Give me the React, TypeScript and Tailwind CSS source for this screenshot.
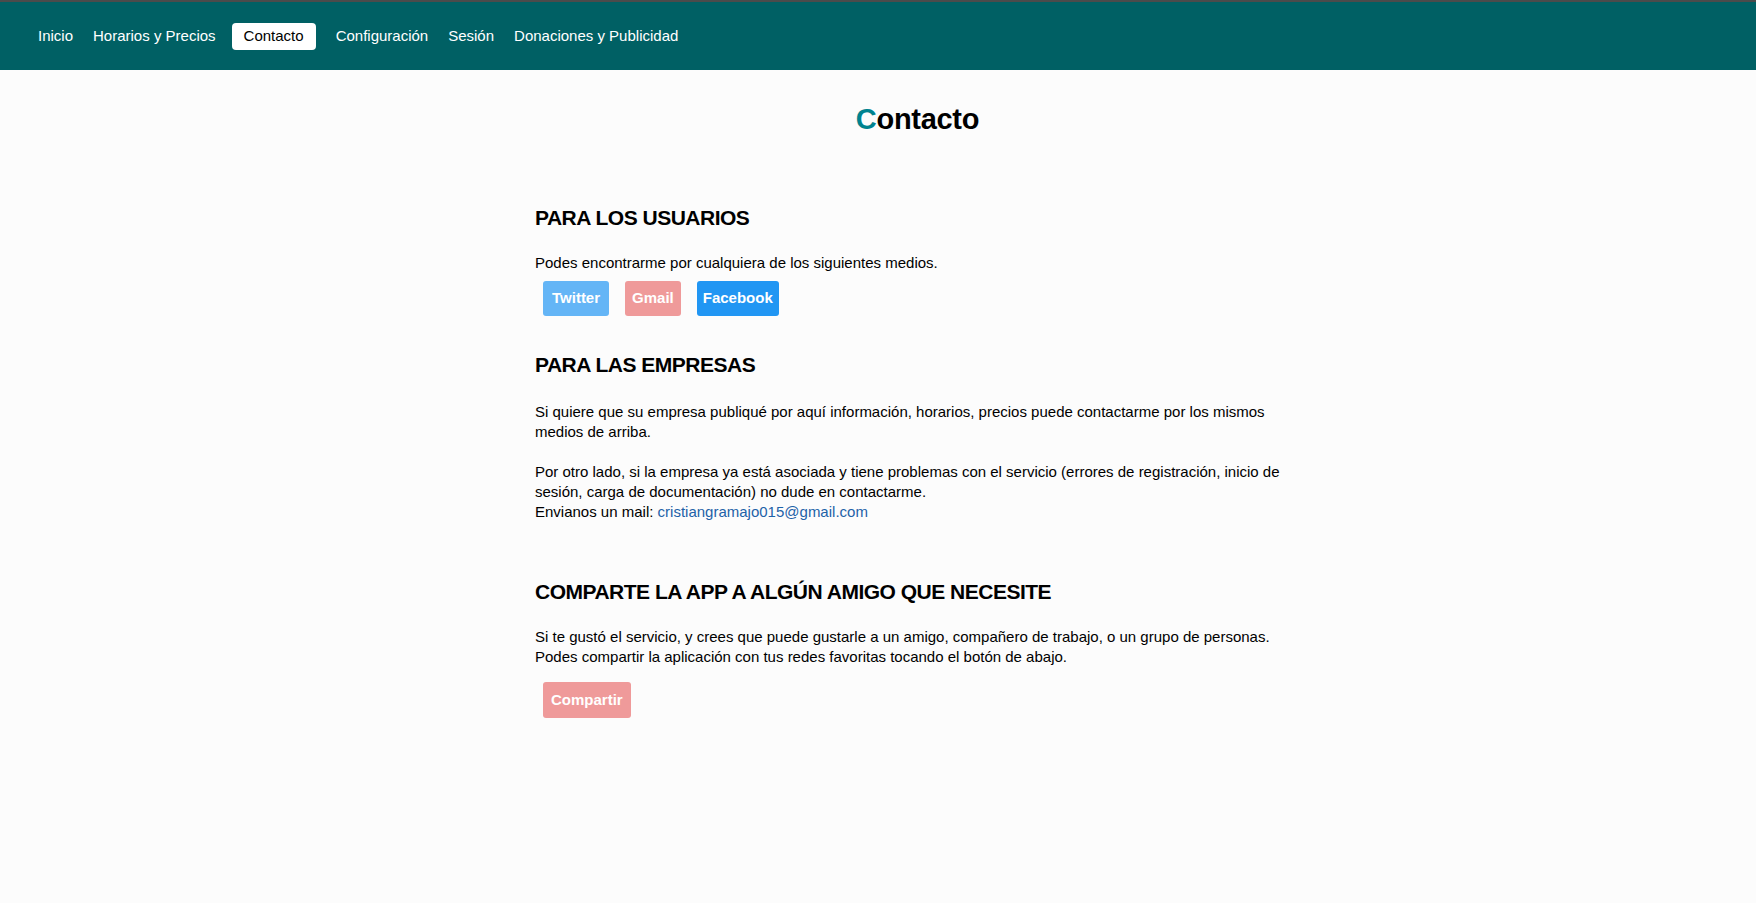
import React from 'react';

const font = { fontFamily: '"Liberation Sans", Arial, sans-serif' };

const links = ['Inicio', 'Horarios y Precios', 'Contacto', 'Configuración', 'Sesión', 'Donaciones y Publicidad'];

export default function App() {
  return (
    <div style={font} className="min-h-[903px] bg-[#fcfcfc] text-black">
      {/* Navbar */}
      <nav className="h-[70px] bg-[#006064] border-t-2 border-[#4b4b4b] flex items-center gap-[20px] pl-[38px]">
        {links.map((l) =>
          l === 'Contacto' ? (
            <a key={l} href="#" className="-ml-[4px] px-[12px] h-[27px] flex items-center bg-white text-black rounded-[4px] text-[15px]">
              {l}
            </a>
          ) : (
            <a key={l} href="#" className="text-white text-[15px]">
              {l}
            </a>
          )
        )}
      </nav>

      <main className="ml-[535px] w-[765px]">
        <h1 className="text-center text-[29px] font-bold mt-[29px] leading-[40px] tracking-[-0.3px]">
          <span className="text-[#00838f]">C</span>ontacto
        </h1>

        {/* Usuarios */}
        <h2 className="text-[21px] font-bold mt-[64px] leading-[30px] tracking-[-0.5px]">PARA LOS USUARIOS</h2>
        <p className="text-[15px] mt-[20px] leading-[20px]">Podes encontrarme por cualquiera de los siguientes medios.</p>
        <div className="flex mt-[8px]">
          <button className="mx-2 h-[35px] px-[9px] rounded-[3px] bg-[#64b5f6] text-white font-bold text-[15px]">Twitter</button>
          <button className="mx-2 h-[35px] px-[7px] rounded-[3px] bg-[#ef9a9a] text-white font-bold text-[15px]">Gmail</button>
          <button className="mx-2 h-[35px] px-[6px] rounded-[3px] bg-[#2196f3] text-white font-bold text-[15px]">Facebook</button>
        </div>

        {/* Empresas */}
        <h2 className="text-[21px] font-bold mt-[34px] leading-[30px] tracking-[-0.5px]">PARA LAS EMPRESAS</h2>
        <p className="text-[15px] mt-[22px] leading-[20px]">
          Si quiere que su empresa publiqué por aquí información, horarios, precios puede contactarme por los mismos medios de arriba.
        </p>
        <p className="text-[15px] mt-[20px] leading-[20px]">
          Por otro lado, si la empresa ya está asociada y tiene problemas con el servicio (errores de registración, inicio de sesión, carga de documentación) no dude en contactarme.
          <br />
          Envianos un mail: <a href="#" className="text-[#1e62a8]">cristiangramajo015@gmail.com</a>
        </p>

        {/* Compartir */}
        <h2 className="text-[21px] font-bold mt-[55px] leading-[30px] tracking-[-0.5px]">COMPARTE LA APP A ALGÚN AMIGO QUE NECESITE</h2>
        <p className="text-[15px] mt-[20px] leading-[20px]">
          Si te gustó el servicio, y crees que puede gustarle a un amigo, compañero de trabajo, o un grupo de personas.
          <br />
          Podes compartir la aplicación con tus redes favoritas tocando el botón de abajo.
        </p>
        <button className="mx-2 mt-[15px] h-[36px] px-[8px] rounded-[3px] bg-[#ef9a9a] text-white font-bold text-[15px]">Compartir</button>
      </main>
    </div>
  );
}
